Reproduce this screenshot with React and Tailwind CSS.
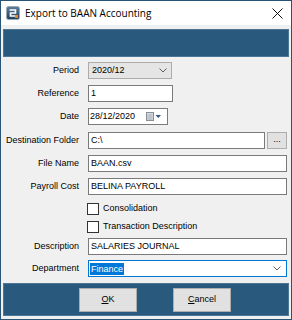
import React from "react";

function Chevron({ className = "" }) {
  return (
    <svg width="8" height="5" viewBox="0 0 8 5" className={className}>
      <path d="M0.5 0.5 L4 4 L7.5 0.5" fill="none" stroke="#606060" strokeWidth="1" />
    </svg>
  );
}

function Row({ label, children, className = "" }) {
  return (
    <div className={"flex items-center " + className}>
      <div className="w-[79px] shrink-0 text-right pr-[1px] text-[9px] leading-none text-black">{label}</div>
      <div className="ml-[8px] flex-1 flex items-center h-full">{children}</div>
    </div>
  );
}

function TextBox({ value, className = "" }) {
  return (
    <div className={"h-full bg-white border border-[#7a7a7a] flex items-center pl-[2px] text-[9px] text-black " + className}>
      {value}
    </div>
  );
}

export default function App() {
  return (
    <div className="w-[292px] h-[320px] border border-[#2a5476] bg-[#f0f0f0] flex flex-col font-['Liberation_Sans',Arial,sans-serif] overflow-hidden">
      {/* Title bar */}
      <div className="h-[24px] bg-white flex items-center shrink-0">
        <svg width="14" height="14" viewBox="0 0 14 14" className="ml-[5px]">
          <defs>
            <linearGradient id="ig" x1="0" y1="0" x2="0" y2="1">
              <stop offset="0" stopColor="#5a7e9c" />
              <stop offset="1" stopColor="#1e3f5c" />
            </linearGradient>
          </defs>
          <rect x="0.5" y="0.5" width="13" height="13" rx="2" fill="url(#ig)" stroke="#9aa9b6" />
          <path d="M3.5 4 L9.5 4 L9.5 7 L4.5 7 L4.5 10 L10.5 10" fill="none" stroke="#ffffff" strokeWidth="1.6" />
          <rect x="9" y="9" width="3" height="3" fill="#e8892b" />
        </svg>
        <span className="ml-[5px] text-[10px] text-black font-['Open_Sans',sans-serif] leading-none">Export to BAAN Accounting</span>
        <svg width="11" height="11" viewBox="0 0 11 11" className="ml-auto mr-[8px]">
          <path d="M0.5 0.5 L10.5 10.5 M10.5 0.5 L0.5 10.5" stroke="#111" strokeWidth="1" />
        </svg>
      </div>

      {/* Top blue band */}
      <div className="mt-[4px] mx-[2px] h-[28px] bg-[#295a7e] border border-[#4d7595] shrink-0" />

      {/* Form */}
      <div className="h-[226px] flex flex-col pr-[4px] shrink-0">
        <Row label="Period" className="mt-[5px] h-[17px]">
          <div className="w-[84px] h-full bg-[#e5e5e5] border border-[#acacac] flex items-center pl-[3px] text-[9px] text-black">
            2020/12
            <Chevron className="ml-auto mr-[4px]" />
          </div>
        </Row>
        <Row label="Reference" className="mt-[6px] h-[17px]">
          <TextBox value="1" className="w-[85px]" />
        </Row>
        <Row label="Date" className="mt-[6px] h-[17px]">
          <div className="w-[80px] h-full bg-white border border-[#7a7a7a] flex items-center pl-[1px] text-[9px] text-black">
            28/12/2020
            <svg width="16" height="9" viewBox="0 0 16 9" className="ml-auto mr-[5px]">
              <rect x="0.5" y="0.5" width="7" height="8" fill="#d8dde3" stroke="#8a8f96" />
              <path d="M1.5 3 H6.5 M1.5 5 H6.5 M1.5 7 H6.5" stroke="#9aa1a9" strokeWidth="0.8" />
              <path d="M9.5 3 L15 3 L12.25 6 Z" fill="#33557f" />
            </svg>
          </div>
        </Row>
        <Row label="Destination Folder" className="mt-[7px] h-[17px]">
          <TextBox value="C:\" className="flex-1" />
          <div className="ml-[2px] w-[20px] h-full bg-[#e1e1e1] border border-[#adadad] flex items-center justify-center text-[9px] text-black leading-none pb-[2px]">
            ...
          </div>
        </Row>
        <Row label="File Name" className="mt-[6px] h-[17px]">
          <TextBox value="BAAN.csv" className="flex-1" />
        </Row>
        <Row label="Payroll Cost" className="mt-[6px] h-[17px]">
          <TextBox value="BELINA PAYROLL" className="flex-1" />
        </Row>
        <Row label="" className="mt-[7px] h-[13px]">
          <div className="w-[12px] h-[12px] bg-white border border-[#333333] -ml-[1px]" />
          <span className="ml-[4px] text-[9px] text-black">Consolidation</span>
        </Row>
        <Row label="" className="mt-[5px] h-[13px]">
          <div className="w-[12px] h-[12px] bg-white border border-[#333333] -ml-[1px]" />
          <span className="ml-[4px] text-[9px] text-black">Transaction Description</span>
        </Row>
        <Row label="Description" className="mt-[5px] h-[17px]">
          <TextBox value="SALARIES JOURNAL" className="flex-1" />
        </Row>
        <Row label="Department" className="mt-[5px] h-[17px]">
          <div className="flex-1 h-full bg-white border border-[#0078d7] flex items-center pl-[1px] text-[9px]">
            <span className="bg-[#0078d7] text-white px-[1px] leading-[12px]">Finance</span>
            <Chevron className="ml-auto mr-[5px]" />
          </div>
        </Row>
      </div>

      {/* Bottom blue band */}
      <div className="mx-[2px] h-[33px] bg-[#295a7e] border border-[#4d7595] flex items-center pl-[75px] shrink-0">
        <button className="w-[58px] h-[24px] bg-[#e1e1e1] border border-[#adadad] text-[9px] text-black">
          <span className="underline">O</span>K
        </button>
        <button className="ml-[36px] w-[58px] h-[24px] bg-[#e1e1e1] border border-[#adadad] text-[9px] text-black">
          <span className="underline">C</span>ancel
        </button>
      </div>
    </div>
  );
}
